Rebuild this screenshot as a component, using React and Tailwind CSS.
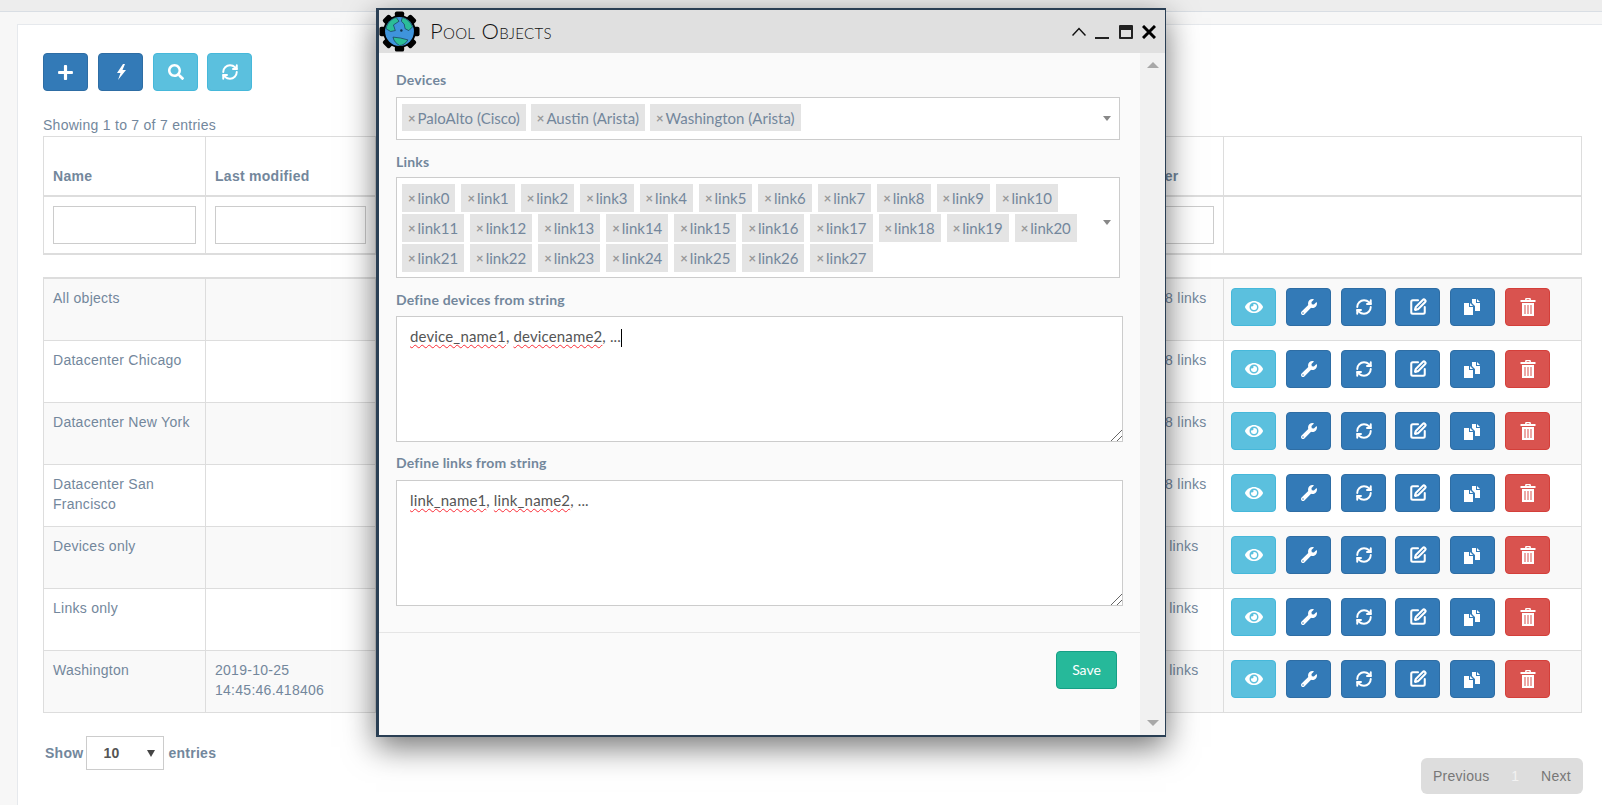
import React from 'react';
import { FaPlus, FaSearch, FaEye, FaWrench } from 'react-icons/fa';
import { RefreshCw, SquarePen } from 'lucide-react';

const rows = [
  { name: 'All objects', objects: '28 links' },
  { name: 'Datacenter Chicago', objects: '28 links' },
  { name: 'Datacenter New York', objects: '28 links' },
  { name: 'Datacenter San Francisco', objects: '28 links' },
  { name: 'Devices only', objects: '0 links' },
  { name: 'Links only', objects: '0 links' },
  { name: 'Washington', modified: '2019-10-25 14:45:46.418406', objects: '2 links' }
];

const links = Array.from({ length: 28 }, (_, i) => `link${i}`);

function BoltIcon() {
  return (
    <svg viewBox="0 0 12 16" className="w-[12px] h-[16px]" fill="currentColor">
      <path d="M8 0L2 9h3.5L3 16l8-10H7.5L10 0z" />
    </svg>
  );
}

function DuplicateIcon() {
  return (
    <svg viewBox="0 0 17 17" className="w-[17px] h-[17px]" fill="currentColor">
      <path d="M0 5h5v4h4v8H0z" />
      <path d="M6 5l3 3H6z" />
      <path d="M8 1h4v4h4v8h-5V8L8 5z" />
      <path d="M13 1l3 3h-3z" />
    </svg>
  );
}

function TrashIcon() {
  return (
    <svg viewBox="0 0 16 18" className="w-[16px] h-[18px]" fill="currentColor">
      <path d="M5.5 0h5l.5 2h4.5v2H.5V2H5zM6.7 1.2L6.5 2h3l-.2-.8z" />
      <path fillRule="evenodd" d="M2 5h12v13H2zM4.5 7v9h1V7zM7.5 7v9h1V7zM10.5 7v9h1V7z" />
    </svg>
  );
}

function Logo() {
  const teeth = [0, 45, 90, 135, 180, 225, 270, 315];
  return (
    <svg viewBox="0 0 44 44" className="w-[41px] h-[41px] shrink-0">
      {teeth.map((a) => (
        <rect key={a} x="17" y="0.5" width="10" height="9" rx="2" fill="#000" transform={`rotate(${a} 22 22)`} />
      ))}
      <circle cx="22" cy="22" r="17.5" fill="#000" />
      <circle cx="22" cy="22" r="15.5" fill="#3f94dc" />
      <path d="M7.5 19c1-6 6-11 11-12l3 4-6 4 2 6-5 1z" fill="#2bbd98" stroke="#15324a" strokeWidth="0.7" />
      <path d="M25 7c5 1 9 5 11 10l-4 4-4-2-1-5-3-3z" fill="#2bbd98" stroke="#15324a" strokeWidth="0.7" />
      <path d="M15 28l8 1 8 2c-2 4-6 6-9 6-3-2-6-4-7-9z" fill="#2bbd98" stroke="#15324a" strokeWidth="0.7" />
      <circle cx="24" cy="21" r="1.3" fill="#15324a" />
    </svg>
  );
}

function Btn({ color, children }) {
  const colors = {
    blue: 'bg-[#337ab7] border-[#2e6da4]',
    cyan: 'bg-[#5bc0de] border-[#46b8da]',
    red: 'bg-[#d9534f] border-[#d43f3a]'
  };
  return (
    <button className={`w-[45px] h-[38px] shrink-0 rounded border flex items-center justify-center text-white text-[16px] ${colors[color]}`}>
      {children}
    </button>
  );
}

function Tag({ label, short }) {
  return (
    <span className={`${short ? 'h-[27px]' : 'h-[28px]'} px-[6px] bg-[#e4e4e4] flex items-center text-[15px] text-[#73879c] whitespace-nowrap`}>
      <span className="text-[#999] font-bold text-[13px] mr-[2px]">×</span>
      {label}
    </span>
  );
}

function Squiggle({ children }) {
  return <span className="underline decoration-wavy decoration-red-500 decoration-1 [text-underline-offset:2px]">{children}</span>;
}

function FakeTextarea({ children }) {
  return (
    <div className="relative w-[727px] h-[126px] bg-white border border-[#ccc] px-[13px] py-[9px] text-[15px] tracking-[0.15px] leading-5 text-[#555]">
      {children}
      <svg viewBox="0 0 12 12" className="absolute right-0 bottom-0 w-3 h-3" stroke="#666" strokeWidth="1" fill="none">
        <path d="M1 12L12 1M7 12l5-5" />
      </svg>
    </div>
  );
}

function PoolWindow() {
  return (
    <div className="absolute left-[376px] top-[8px] w-[790px] h-[729px] border-y-[2px] border-l-[3px] border-r border-[#2a3f54] bg-[#fafafa] shadow-[0_10px_30px_rgba(0,0,0,0.55)] flex flex-col font-['Lato',sans-serif] tracking-normal">
      {/* Title bar */}
      <div className="h-[43px] shrink-0 bg-[#e0e0e0] flex items-center">
        <Logo />
        <h1 className="ml-[10px] -mt-[1px] text-[22px] font-light [font-variant:small-caps] text-[#111] tracking-[0.3px]">Pool Objects</h1>
        <div className="ml-auto mr-[9px] flex items-center gap-[9.5px] text-black">
          <svg viewBox="0 0 14 9" className="w-[14px] h-[9px] -mt-[1px]" fill="none" stroke="#111" strokeWidth="1.5"><path d="M0.5 8.5L7 1.5l6.5 7" /></svg>
          <div className="w-[14px] h-[2px] bg-[#222] mt-[12px]" />
          <div className="w-[14px] h-[14px] border-[2px] border-[#222] border-t-[5px] rounded-[1px]" />
          <svg viewBox="0 0 14 14" className="w-[14px] h-[14px]" fill="none" stroke="#000" strokeWidth="3"><path d="M1 1l12 12M13 1L1 13" /></svg>
        </div>
      </div>

      <div className="flex-1 flex min-h-0">
        <div className="flex-1 flex flex-col">
          <div className="pl-[17px] pt-[17px] h-[580px] shrink-0 border-b border-[#e5e5e5]">
            <label className="block text-[14px] leading-[20px] font-bold tracking-[0.2px] text-[#73879c] mb-[7px]">Devices</label>
            <div className="relative w-[724px] h-[43px] bg-white border border-[#ccc] px-[5px] pt-[6px] flex gap-[5px]">
              <Tag short label="PaloAlto (Cisco)" />
              <Tag short label="Austin (Arista)" />
              <Tag short label="Washington (Arista)" />
              <span className="absolute right-[8px] top-[18px] border-x-[4px] border-x-transparent border-t-[5px] border-t-[#888]" />
            </div>

            <label className="block text-[14px] leading-[20px] font-bold tracking-[0.2px] text-[#73879c] mt-[12px] mb-[5px]">Links</label>
            <div className="relative w-[724px] h-[101px] bg-white border border-[#ccc] pl-[5px] pr-[40px] pt-[6px] flex flex-wrap gap-x-[6px] gap-y-[2px] content-start">
              {links.map((l) => (
                <Tag key={l} label={l} />
              ))}
              <span className="absolute right-[8px] top-[42px] border-x-[4px] border-x-transparent border-t-[5px] border-t-[#888]" />
            </div>

            <label className="block text-[14px] leading-[20px] font-bold tracking-[0.2px] text-[#73879c] mt-[12px] mb-[6px]">Define devices from string</label>
            <FakeTextarea>
              <Squiggle>device_name1</Squiggle>, <Squiggle>devicename2</Squiggle>, ...<span className="inline-block w-px h-[18px] bg-black align-middle" />
            </FakeTextarea>

            <label className="block text-[14px] leading-[20px] font-bold tracking-[0.2px] text-[#73879c] mt-[11px] mb-[7px]">Define links from string</label>
            <FakeTextarea>
              <Squiggle>link_name1</Squiggle>, <Squiggle>link_name2</Squiggle>, ...
            </FakeTextarea>
          </div>
          <div className="flex justify-end pr-[23px] pt-[18px]">
            <button className="w-[61px] h-[38px] rounded bg-[#26b99a] border border-[#169f85] text-white text-[14px]">Save</button>
          </div>
        </div>
        {/* Scrollbar */}
        <div className="w-[25px] shrink-0 bg-[#f1f1f1] flex flex-col items-center justify-between py-[9px]">
          <span className="border-x-[6px] border-x-transparent border-b-[6px] border-b-[#a8a8a8]" />
          <span className="border-x-[6px] border-x-transparent border-t-[6px] border-t-[#a8a8a8]" />
        </div>
      </div>
    </div>
  );
}

function App() {
  return (
    <div className="relative h-[805px] overflow-hidden bg-[#f7f7f7] font-['Liberation_Sans',sans-serif] text-[14px] leading-5 tracking-[0.27px] text-[#73879c]">
      <div className="h-[12px] bg-[#ededed] border-b border-[#d9dee4]" />
      <div className="ml-[17px] mt-[12px] h-[800px] bg-white border border-[#e6e9ed] border-r-0 pl-[25px] pr-[20px] pt-[28px]">
        <div className="flex gap-[10px]">
          <Btn color="blue"><FaPlus className="text-[17px]" /></Btn>
          <Btn color="blue"><BoltIcon /></Btn>
          <Btn color="cyan"><FaSearch /></Btn>
          <div className="-ml-[1px]"><Btn color="cyan"><RefreshCw size={18} strokeWidth={2.6} /></Btn></div>
        </div>

        <div className="mt-[24px] h-[21px]">Showing 1 to 7 of 7 entries</div>

        <table className="w-[1539px] table-fixed border-collapse">
          <colgroup>
            <col className="w-[162px]" />
            <col className="w-[170px]" />
            <col className="w-[370px]" />
            <col className="w-[369px]" />
            <col className="w-[109px]" />
            <col />
          </colgroup>
          <thead>
            <tr className="h-[59px] border-b-2 border-[#ddd]">
              {['Name', 'Last modified', '', '', 'Number', ''].map((h, i) => (
                <th key={i} className="border border-[#ddd] border-b-2 px-[9px] pb-[9px] align-bottom text-left font-bold whitespace-nowrap">{h}</th>
              ))}
            </tr>
          </thead>
          <tbody>
            <tr className="h-[58px]">
              {[0, 1, 2, 3, 4].map((i) => (
                <td key={i} className="border border-[#ddd] border-b-2 px-[9px]">
                  <input className="block w-full h-[38px] border border-[#ccc] bg-white" />
                </td>
              ))}
              <td className="border border-[#ddd] border-b-2" />
            </tr>
          </tbody>
        </table>

        <table className="w-[1539px] mt-[22px] table-fixed border-collapse border-t-2 border-[#ddd]">
          <colgroup>
            <col className="w-[162px]" />
            <col className="w-[170px]" />
            <col className="w-[370px]" />
            <col className="w-[369px]" />
            <col className="w-[109px]" />
            <col />
          </colgroup>
          <tbody>
            {rows.map((r, i) => (
              <tr key={r.name} className={`${i === 0 ? 'h-[63px]' : 'h-[62px]'} ${i % 2 === 0 ? 'bg-[#f9f9f9]' : 'bg-white'}`}>
                <td className="border border-[#ddd] px-[9px] pt-[9px] pb-[8px] align-top">{r.name}</td>
                <td className="border border-[#ddd] px-[9px] pt-[9px] pb-[8px] align-top">{r.modified}</td>
                <td className="border border-[#ddd]" />
                <td className="border border-[#ddd]" />
                <td className="border border-[#ddd] pl-[42px] pt-[9px] pb-[8px] align-top whitespace-nowrap">{r.objects}</td>
                <td className="border border-[#ddd] pl-[7px] pt-[9px] align-top">
                  <div className="flex gap-[10px]">
                    <Btn color="cyan"><FaEye className="text-[18px]" /></Btn>
                    <Btn color="blue"><FaWrench /></Btn>
                    <Btn color="blue"><RefreshCw size={18} strokeWidth={2.6} /></Btn>
                    <div className="-ml-[1px]"><Btn color="blue"><SquarePen size={18} strokeWidth={2.75} /></Btn></div>
                    <Btn color="blue"><DuplicateIcon /></Btn>
                    <Btn color="red"><TrashIcon /></Btn>
                  </div>
                </td>
              </tr>
            ))}
          </tbody>
        </table>

        <div className="flex justify-between">
          <div className="flex items-center mt-[23px] ml-[2px] h-[34px] font-bold">
            Show
            <div className="ml-[3px] w-[78px] h-[34px] border border-[#ccc] bg-white flex items-center justify-between pl-[16px] pr-[8px] text-[#555] mr-[4px]">
              10
              <span className="border-x-[4px] border-x-transparent border-t-[7px] border-t-[#444]" />
            </div>
            entries
          </div>
          <div className="mt-[45px] -mr-[1px] w-[162px] h-[36px] rounded-md bg-[#ddd] flex items-center justify-between px-[12px] text-[#777]">
            <span>Previous</span>
            <span className="text-[#f2f2f2]">1</span>
            <span>Next</span>
          </div>
        </div>
      </div>
      <PoolWindow />
    </div>
  );
}

export default App;
